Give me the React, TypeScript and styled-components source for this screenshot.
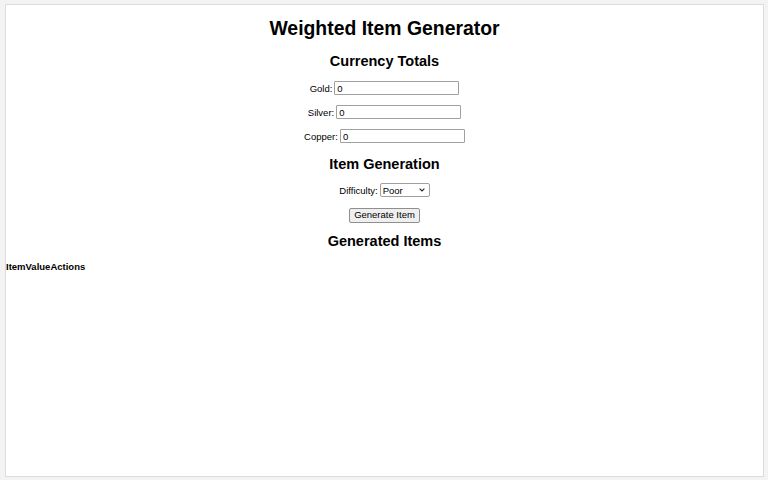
import React from "react";
import styled, { createGlobalStyle } from "styled-components";

const Global = createGlobalStyle`
  html, body { margin: 0; padding: 0; }
  body {
    background: #f3f3f3;
    font-family: "Liberation Sans", Arial, sans-serif;
    color: #000;
  }
`;

const Page = styled.div`
  padding: 4px 4px 3px 5px;
  height: 480px;
  box-sizing: border-box;
`;

const Container = styled.div`
  background: #fff;
  border: 1px solid #dcdcdc;
  height: 100%;
  box-sizing: border-box;
  display: flex;
  flex-direction: column;
`;

const Title = styled.h1`
  font-size: 19.4px;
  font-weight: bold;
  text-align: center;
  margin: 12px 0 0;
  line-height: 23px;
`;

const Heading = styled.h2<{ $top: number }>`
  font-size: 14.5px;
  font-weight: bold;
  text-align: center;
  margin: ${(p) => p.$top}px 0 0;
  line-height: 17px;
`;

const Row = styled.div<{ $top: number }>`
  display: flex;
  justify-content: center;
  align-items: center;
  gap: 2px;
  margin-top: ${(p) => p.$top}px;
  height: 14px;
`;

const Label = styled.label`
  font-size: 9.5px;
`;

const Input = styled.input`
  width: 125px;
  height: 14px;
  box-sizing: border-box;
  border: 1px solid #a0a0a0;
  border-radius: 1px;
  padding: 0 2px;
  font-size: 9.5px;
  font-family: "Liberation Sans", Arial, sans-serif;
  outline: none;
`;

const SelectWrap = styled.span`
  position: relative;
  display: inline-flex;
  align-items: center;
`;

const Select = styled.select`
  appearance: none;
  width: 50px;
  height: 14px;
  box-sizing: border-box;
  border: 1px solid #a0a0a0;
  border-radius: 2px;
  padding: 0 0 0 2px;
  font-size: 9.5px;
  font-family: "Liberation Sans", Arial, sans-serif;
  background: #fff;
  color: #000;
`;

const Chevron = styled.svg`
  position: absolute;
  right: 5px;
  top: 5px;
  pointer-events: none;
`;

const Button = styled.button`
  height: 15px;
  padding: 0 4px;
  box-sizing: border-box;
  border: 1px solid #8f8f8f;
  border-radius: 2px;
  background: #efefef;
  font-size: 9.5px;
  font-family: "Liberation Sans", Arial, sans-serif;
  line-height: 12px;
`;

const Table = styled.table`
  align-self: flex-start;
  border-collapse: collapse;
  margin-top: 11px;
  font-size: 9.5px;
`;

const Th = styled.th`
  padding: 0;
  text-align: left;
  font-weight: bold;
  line-height: 12px;
`;

export default function App() {
  return (
    <>
      <Global />
      <Page>
        <Container>
          <Title>Weighted Item Generator</Title>
          <Heading $top={13}>Currency Totals</Heading>
          <Row $top={11}>
            <Label>Gold:</Label>
            <Input defaultValue="0" />
          </Row>
          <Row $top={10}>
            <Label>Silver:</Label>
            <Input defaultValue="0" />
          </Row>
          <Row $top={10}>
            <Label>Copper:</Label>
            <Input defaultValue="0" />
          </Row>
          <Heading $top={13}>Item Generation</Heading>
          <Row $top={10}>
            <Label>Difficulty:</Label>
            <SelectWrap>
              <Select defaultValue="Poor">
                <option>Poor</option>
                <option>Common</option>
                <option>Rare</option>
              </Select>
              <Chevron width="6" height="4" viewBox="0 0 6 4">
                <path d="M0.6 0.6 L3 3 L5.4 0.6" fill="none" stroke="#222" strokeWidth="1.1" />
              </Chevron>
            </SelectWrap>
          </Row>
          <Row $top={11}>
            <Button>Generate Item</Button>
          </Row>
          <Heading $top={11}>Generated Items</Heading>
          <Table>
            <thead>
              <tr>
                <Th>Item</Th>
                <Th>Value</Th>
                <Th>Actions</Th>
              </tr>
            </thead>
            <tbody />
          </Table>
        </Container>
      </Page>
    </>
  );
}
